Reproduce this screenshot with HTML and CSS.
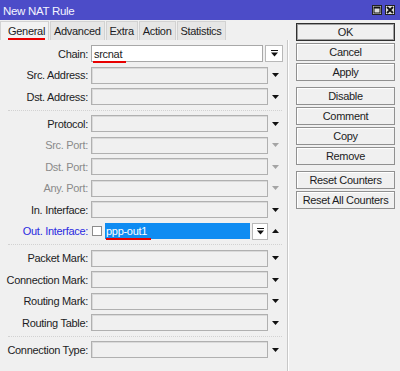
FILE: index.html
```html
<!DOCTYPE html>
<html>
<head>
<meta charset="utf-8">
<link rel="stylesheet" href="styles.css">
</head>
<body>
<div class="window">
  <div class="titlebar">
    <span class="title">New NAT Rule</span>
    <div class="winbtns">
      <span class="wbtn"><svg width="8" height="8" viewBox="0 0 8 8"><rect x="1" y="1" width="6" height="6" fill="none" stroke="#111" stroke-width="1"/><rect x="1" y="1" width="6" height="1.5" fill="#111"/></svg></span>
      <span class="wbtn"><svg width="8" height="8" viewBox="0 0 8 8"><path d="M1 1 L7 7 M7 1 L1 7" stroke="#111" stroke-width="1.8"/></svg></span>
    </div>
  </div>
  <div class="main">
    <div class="left">
      <div class="tabs">
        <span class="tab active"><span class="mark">General</span></span>
        <span class="tab">Advanced</span>
        <span class="tab">Extra</span>
        <span class="tab">Action</span>
        <span class="tab">Statistics</span>
      </div>
      <div class="panel">
        <div class="row">
          <span class="lbl">Chain:</span>
          <div class="field wide">
            <span class="inp white"><span class="mark mark-in">srcnat</span></span>
            <span class="selbtn"><svg width="7" height="7" viewBox="0 0 7 7"><rect x="0" y="0" width="7" height="1" fill="#111"/><polygon points="0,2.5 7,2.5 3.5,6.5" fill="#111"/></svg></span>
          </div>
        </div>
        <div class="row">
          <span class="lbl">Src. Address:</span>
          <div class="field"><span class="inp"></span></div>
          <span class="arrow"><svg width="7" height="4" viewBox="0 0 7 4"><polygon points="0,0 7,0 3.5,4" fill="#111"/></svg></span>
        </div>
        <div class="row">
          <span class="lbl">Dst. Address:</span>
          <div class="field"><span class="inp"></span></div>
          <span class="arrow"><svg width="7" height="4" viewBox="0 0 7 4"><polygon points="0,0 7,0 3.5,4" fill="#111"/></svg></span>
        </div>

        <div class="sep"></div>

        <div class="row">
          <span class="lbl">Protocol:</span>
          <div class="field"><span class="inp"></span></div>
          <span class="arrow"><svg width="7" height="4" viewBox="0 0 7 4"><polygon points="0,0 7,0 3.5,4" fill="#111"/></svg></span>
        </div>
        <div class="row">
          <span class="lbl dis">Src. Port:</span>
          <div class="field"><span class="inp"></span></div>
          <span class="arrow"><svg width="7" height="4" viewBox="0 0 7 4"><polygon points="0,0 7,0 3.5,4" fill="#a4a4a4"/></svg></span>
        </div>
        <div class="row">
          <span class="lbl dis">Dst. Port:</span>
          <div class="field"><span class="inp"></span></div>
          <span class="arrow"><svg width="7" height="4" viewBox="0 0 7 4"><polygon points="0,0 7,0 3.5,4" fill="#a4a4a4"/></svg></span>
        </div>
        <div class="row">
          <span class="lbl dis">Any. Port:</span>
          <div class="field"><span class="inp"></span></div>
          <span class="arrow"><svg width="7" height="4" viewBox="0 0 7 4"><polygon points="0,0 7,0 3.5,4" fill="#a4a4a4"/></svg></span>
        </div>
        <div class="row">
          <span class="lbl">In. Interface:</span>
          <div class="field"><span class="inp"></span></div>
          <span class="arrow"><svg width="7" height="4" viewBox="0 0 7 4"><polygon points="0,0 7,0 3.5,4" fill="#111"/></svg></span>
        </div>
        <div class="row">
          <span class="lbl blue">Out. Interface:</span>
          <div class="field">
            <span class="check"></span>
            <span class="inp sel"><span class="mark mark-sel">ppp-out1</span></span>
            <span class="selbtn small"><svg width="7" height="7" viewBox="0 0 7 7"><rect x="0" y="0" width="7" height="1" fill="#111"/><polygon points="0,2.5 7,2.5 3.5,6.5" fill="#111"/></svg></span>
          </div>
          <span class="arrow"><svg width="7" height="4" viewBox="0 0 7 4"><polygon points="0,4 7,4 3.5,0" fill="#111"/></svg></span>
        </div>

        <div class="sep"></div>

        <div class="row">
          <span class="lbl">Packet Mark:</span>
          <div class="field"><span class="inp"></span></div>
          <span class="arrow"><svg width="7" height="4" viewBox="0 0 7 4"><polygon points="0,0 7,0 3.5,4" fill="#111"/></svg></span>
        </div>
        <div class="row">
          <span class="lbl">Connection Mark:</span>
          <div class="field"><span class="inp"></span></div>
          <span class="arrow"><svg width="7" height="4" viewBox="0 0 7 4"><polygon points="0,0 7,0 3.5,4" fill="#111"/></svg></span>
        </div>
        <div class="row">
          <span class="lbl">Routing Mark:</span>
          <div class="field"><span class="inp"></span></div>
          <span class="arrow"><svg width="7" height="4" viewBox="0 0 7 4"><polygon points="0,0 7,0 3.5,4" fill="#111"/></svg></span>
        </div>
        <div class="row">
          <span class="lbl">Routing Table:</span>
          <div class="field"><span class="inp"></span></div>
          <span class="arrow"><svg width="7" height="4" viewBox="0 0 7 4"><polygon points="0,0 7,0 3.5,4" fill="#111"/></svg></span>
        </div>

        <div class="sep"></div>

        <div class="row">
          <span class="lbl">Connection Type:</span>
          <div class="field"><span class="inp"></span></div>
          <span class="arrow"><svg width="7" height="4" viewBox="0 0 7 4"><polygon points="0,0 7,0 3.5,4" fill="#111"/></svg></span>
        </div>
      </div>
    </div>
    <div class="right">
      <div class="btngroup">
        <span class="btn default">OK</span>
        <span class="btn">Cancel</span>
        <span class="btn">Apply</span>
      </div>
      <div class="btngroup">
        <span class="btn">Disable</span>
        <span class="btn">Comment</span>
        <span class="btn">Copy</span>
        <span class="btn">Remove</span>
      </div>
      <div class="btngroup">
        <span class="btn">Reset Counters</span>
        <span class="btn">Reset All Counters</span>
      </div>
    </div>
  </div>
</div>
</body>
</html>
```

FILE: styles.css
```css
* { box-sizing: border-box; }
html, body { margin: 0; padding: 0; }
body {
  background: #f0f0f0;
  font-family: "Liberation Sans", Arial, sans-serif;
  font-size: 11px;
  letter-spacing: -0.3px;
  color: #1c1c24;
}
.window {
  width: 400px;
  height: 371px;
  background: #f0f0f0;
  overflow: hidden;
}
.titlebar {
  height: 20px;
  background: #4c4cc8;
  display: flex;
  align-items: center;
  justify-content: space-between;
  padding: 0 5px 0 3px;
}
.title {
  color: #f4f4ff;
  font-size: 11.5px;
  padding-top: 1px;
}
.winbtns { display: flex; gap: 3px; }
.wbtn {
  width: 10px;
  height: 10px;
  background: #dcdcdc;
  border: 1px solid #222;
  display: flex;
  align-items: center;
  justify-content: center;
}
.wbtn svg { display: block; }
.main { display: flex; height: 351px; }
.left { width: 288px; display: flex; flex-direction: column; }
.tabs {
  display: flex;
  height: 20px;
  padding-top: 1px;
  gap: 1px;
}
.tab {
  height: 19px;
  display: flex;
  align-items: center;
  padding: 0 3px 0 3px;
  background: #e6e6e6;
  border: 1px solid #d2d2d2;
  border-bottom: none;
}
.tab.active {
  background: #f2f2f2;
  padding: 0 5px 0 7px;
  width: 49px;
}
.panel {
  flex: 1;
  padding-top: 5px;
  border-right: 1px solid #c8c8c8;
  box-shadow: 1px 0 0 #ffffff;
}
.row {
  display: flex;
  align-items: center;
  height: 17px;
  margin-bottom: 4.5px;
}
.lbl {
  width: 89px;
  flex: none;
  text-align: right;
  white-space: nowrap;
  padding-right: 1px;
}
.lbl.dis { color: #8a8a8a; }
.lbl.blue { color: #2a2ae0; }
.field {
  width: 177px;
  height: 17px;
  margin-left: 2px;
  display: flex;
  align-items: center;
}
.field.wide { width: 192px; }
.inp {
  flex: 1;
  height: 17px;
  border: 1px solid #b0b0b0;
  box-shadow: inset 1px 1px 0 #dadada;
  background: #f0f0f0;
  display: flex;
  align-items: center;
  padding-left: 2px;
}
.inp.white { background: #ffffff; box-shadow: none; border-color: #a8a8a8; }
.inp.sel {
  background: #0f8cf2;
  color: #ffffff;
  border: none;
  box-shadow: none;
  height: 16px;
  margin-left: 3px;
  padding-left: 1px;
}
.selbtn {
  width: 18px;
  height: 17px;
  margin-left: 2px;
  background: #ffffff;
  border: 1px solid #b8b8b8;
  display: flex;
  align-items: center;
  justify-content: center;
}
.selbtn.small { width: 16px; }
.selbtn svg { display: block; }
.check {
  width: 10px;
  height: 10px;
  margin-left: 1px;
  background: #ffffff;
  border: 1px solid #8c8c8c;
  flex: none;
}
.arrow {
  width: 15px;
  display: flex;
  justify-content: center;
  align-items: center;
}
.arrow svg { display: block; }
.sep {
  height: 0;
  border-top: 1px dotted #d2d2d2;
  margin: 2px 5px 4.5px 8px;
}
.mark { position: relative; }
.mark::after {
  content: "";
  position: absolute;
  left: 0;
  right: 0;
  height: 2px;
  background: #e80000;
}
.tab .mark::after { bottom: -3px; }
.mark-in::after { bottom: -3px; left: -1px; right: -4px; }
.mark-sel::after { bottom: -3px; left: 0; right: -4px; }
.right {
  flex: 1;
  padding: 3px 0 0 8px;
  display: flex;
  flex-direction: column;
  gap: 6px;
}
.btngroup { display: flex; flex-direction: column; gap: 2px; }
.btn {
  width: 99px;
  height: 18px;
  display: flex;
  align-items: center;
  justify-content: center;
  background: #f0f0f0;
  border: 1px solid #909090;
  box-shadow: inset 1px 1px 0 #ffffff;
  white-space: nowrap;
}
.btn.default {
  border: 1px solid #303030;
  box-shadow: inset 0 0 0 1px #a0a0a0;
}
```
